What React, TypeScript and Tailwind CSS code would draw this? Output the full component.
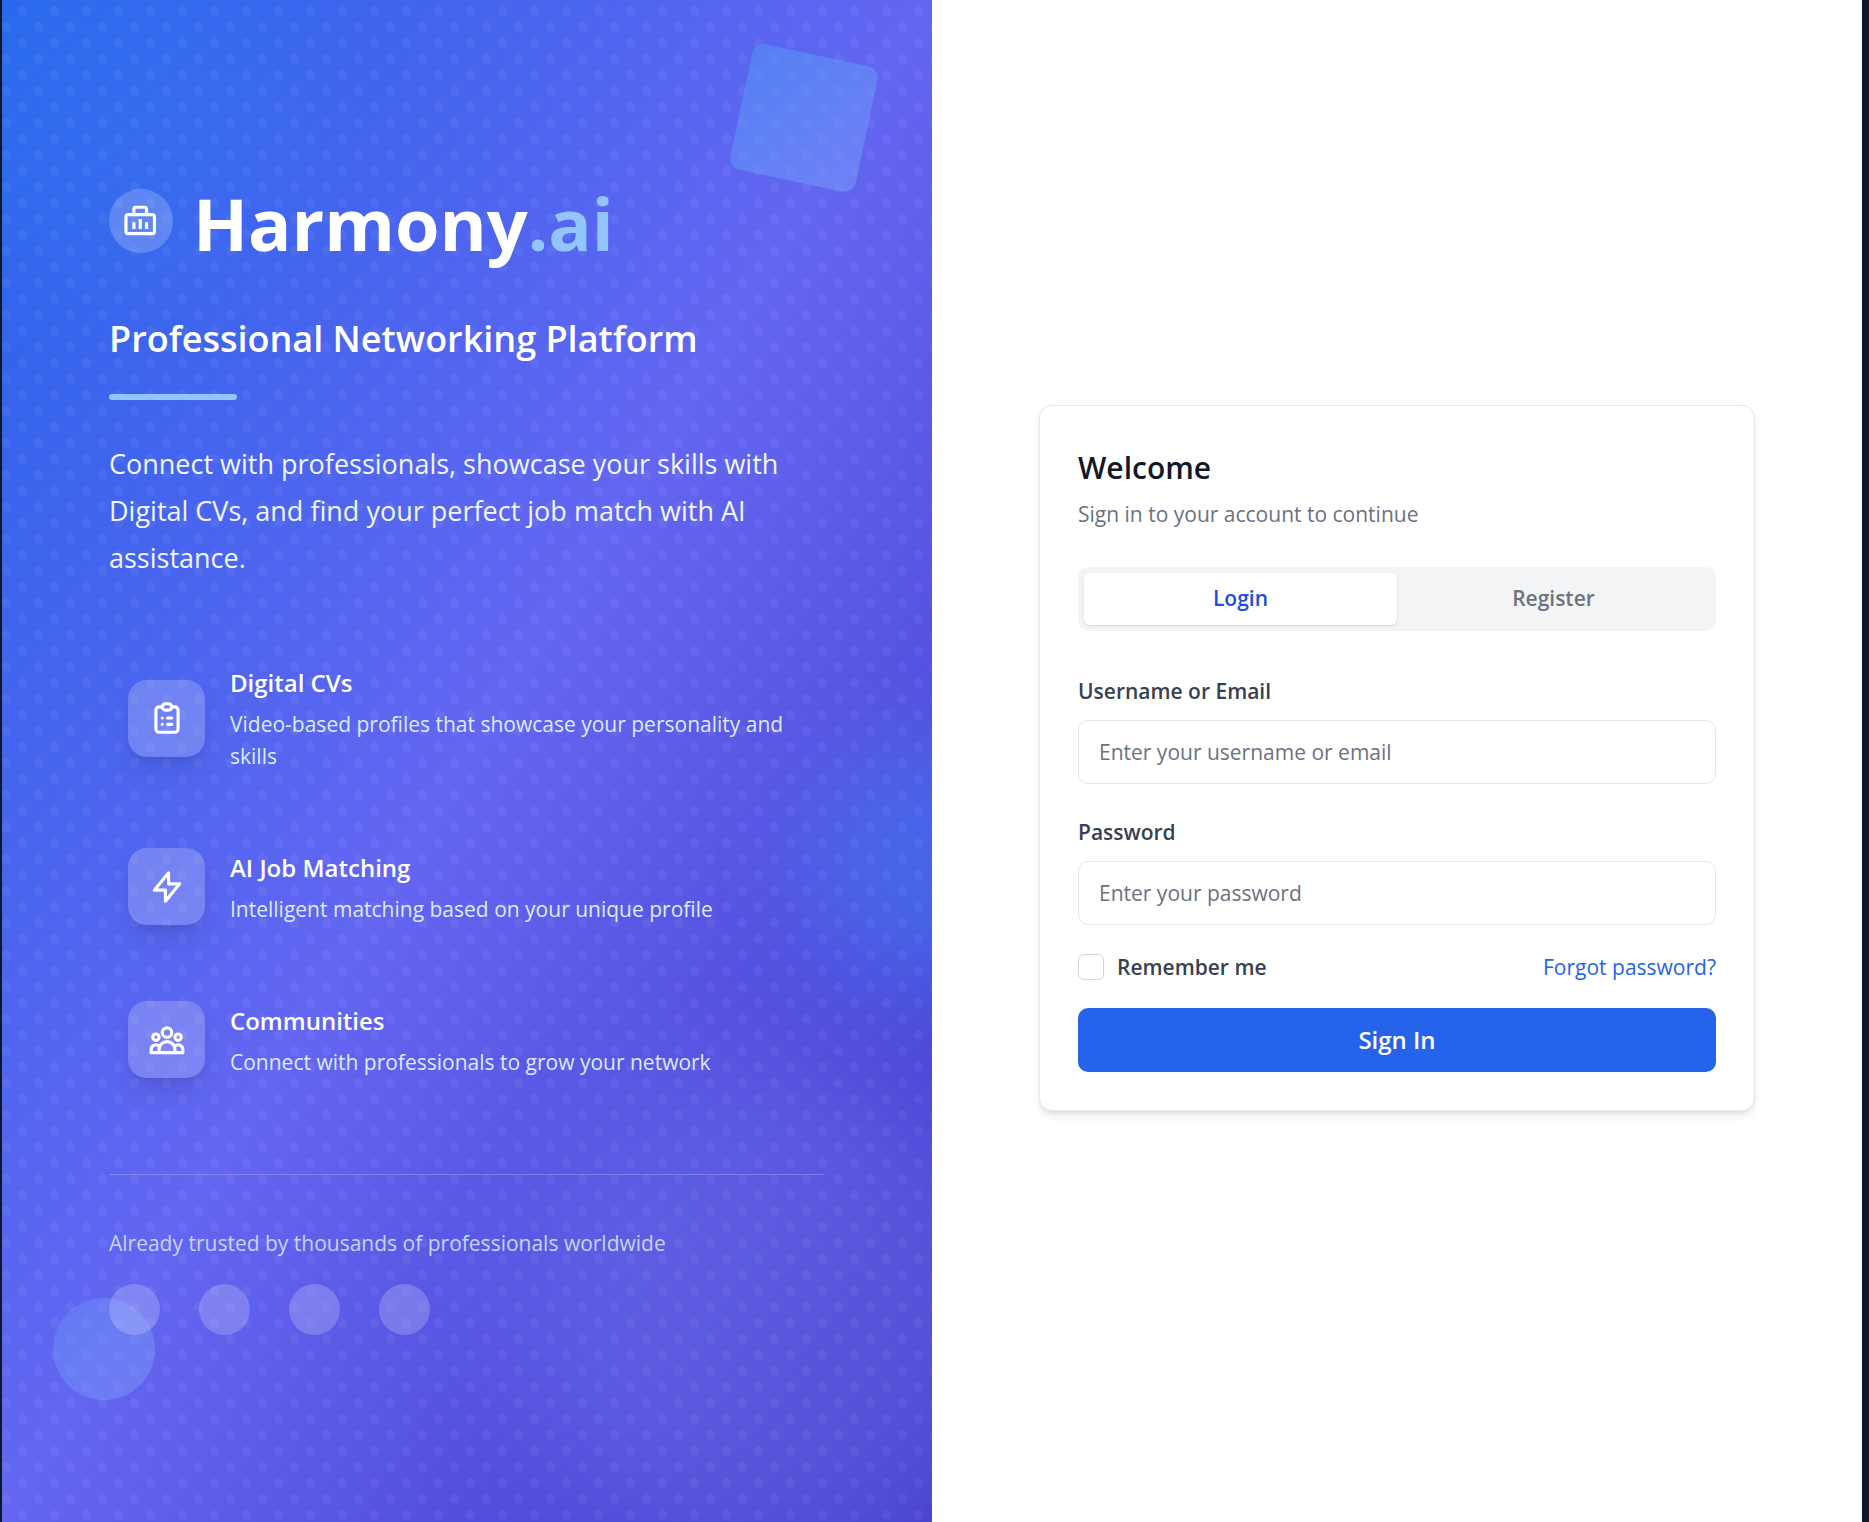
import { useState } from "react";

const features = [
  {
    title: "Digital CVs",
    text: "Video-based profiles that showcase your personality and skills",
    icon: (
      <>
        <path d="M9 5H7a2 2 0 0 0-2 2v12a2 2 0 0 0 2 2h10a2 2 0 0 0 2-2V7a2 2 0 0 0-2-2h-2" />
        <rect x="9" y="3" width="6" height="4" rx="2" />
        <path d="M9 12h.01M12.300 12H15M9 16h.01M12.300 16H15" />
      </>
    ),
  },
  {
    title: "AI Job Matching",
    text: "Intelligent matching based on your unique profile",
    icon: <path d="M13 10V3L4 14h7v7l9-11h-7z" />,
  },
  {
    title: "Communities",
    text: "Connect with professionals to grow your network",
    icon: (
      <>
        <circle cx="12" cy="7.300" r="3" />
        <circle cx="5" cy="10.200" r="2" />
        <circle cx="19" cy="10.200" r="2" />
        <path d="M7 20v-2a5 5 0 0 1 10 0v2H2v-2a3 3 0 0 1 5-2.200M17 20h5v-2a3 3 0 0 0-5-2.200" />
      </>
    ),
  },
];

function DotPattern() {
  return (
    <svg className="absolute inset-0 h-full w-full" aria-hidden="true">
      <defs>
        <pattern id="dots" width="32" height="32" patternUnits="userSpaceOnUse">
          <circle cx="4.8" cy="26.8" r="4.8" fill="#fff" fillOpacity="0.05" />
          <circle cx="20.8" cy="10.8" r="4.8" fill="#fff" fillOpacity="0.05" />
        </pattern>
      </defs>
      <rect width="100%" height="100%" fill="url(#dots)" />
    </svg>
  );
}

function Hero() {
  return (
    <section className="relative flex flex-1 flex-col items-center justify-center overflow-hidden bg-linear-to-br/srgb from-[#2563eb] via-[#6366f1] to-[#4338ca] pb-1">
      <div className="absolute -left-24 -top-24 h-96 w-96 rounded-full bg-[#3b82f6] opacity-25 blur-[64px]" />
      <div className="absolute -right-32 top-[740px] h-64 w-64 rounded-full bg-[#3b82f6] opacity-45 blur-[50px]" />
      <div className="absolute -bottom-16 -right-28 h-[512px] w-[512px] rounded-full bg-[#818cf8] opacity-25 blur-[64px]" />
      <DotPattern />
      <div className="absolute right-16 top-[54px] h-32 w-32 rotate-12 rounded-xl bg-linear-to-br/srgb from-[#4aa8fa] to-[#80aafa] opacity-40" />
      <div className="absolute bottom-[122px] left-[51px] h-[102px] w-[102px] rounded-full bg-linear-to-br/srgb from-[#62a7fa] to-[#96b7fa] opacity-30" />

      <div className="relative w-full max-w-[716px]">
        <div className="flex items-center gap-5">
          <div className="flex h-16 w-16 items-center justify-center rounded-full bg-white/20">
            <svg className="h-[38px] w-[38px]" viewBox="0 0 24 24" fill="none" stroke="#fff" strokeWidth="2" strokeLinecap="round" strokeLinejoin="round" aria-hidden="true">
              <rect x="2.500" y="8" width="18" height="12" rx="1.5" />
              <path d="M7.500 8V4.500a1.200 1.200 0 0 1 1.200-1.200h5.600a1.200 1.200 0 0 1 1.200 1.200V8" />
              <path d="M7.500 12.800v4.200M11.500 10.800v6.200M15.500 12.800v4.200" strokeLinecap="butt" />
            </svg>
          </div>
          <h1 className="pt-1 text-[72px] font-bold leading-[72px] text-white">
            Harmony<span className="text-[#93c5fd]">.ai</span>
          </h1>
        </div>

        <h2 className="mt-[54px] text-[36px] font-semibold leading-[51px] text-white">Professional Networking Platform</h2>
        <div className="mt-[30px] h-[6px] w-32 rounded-full bg-[#93c5fd]" />
        <p className="mt-10 text-[27px] leading-[47px] text-[#eff6ff]">
          Connect with professionals, showcase your skills with Digital CVs, and find your perfect job match with AI
          assistance.
        </p>

        <ul className="mt-16 flex flex-col gap-[38px]">
          {features.map((f) => (
            <li key={f.title} className="flex items-center gap-[25px] px-[19px] py-[19px]">
              <div className="flex h-[77px] w-[77px] shrink-0 items-center justify-center rounded-[19px] bg-white/20 shadow-[0_16px_24px_-5px_rgba(0,0,0,0.1),0_6px_10px_-6px_rgba(0,0,0,0.1)]">
                <svg className="h-[38px] w-[38px]" viewBox="0 0 24 24" fill="none" stroke="#fff" strokeWidth="2" strokeLinecap="round" strokeLinejoin="round" aria-hidden="true">
                  {f.icon}
                </svg>
              </div>
              <div>
                <h3 className="text-[24px] font-semibold leading-[38px] text-white">{f.title}</h3>
                <p className="mt-[6px] text-[21px] leading-8 text-[#dbeafe]">{f.text}</p>
              </div>
            </li>
          ))}
        </ul>

        <div className="mt-[77px] border-t border-white/20 pt-[52px]">
          <p className="text-[21px] leading-8 text-[#c7d2fe]">Already trusted by thousands of professionals worldwide</p>
          <div className="mt-[25px] flex gap-[39px]">
            {[0, 1, 2, 3].map((n) => (
              <div key={n} className="h-[51px] w-[51px] rounded-full bg-white/20" />
            ))}
          </div>
        </div>
      </div>
    </section>
  );
}

function Field({ id, label, type, placeholder }: { id: string; label: string; type: string; placeholder: string }) {
  return (
    <div className="flex flex-col gap-[13px]">
      <label htmlFor={id} className="text-[21px] font-semibold leading-8 text-[#374151]">
        {label}
      </label>
      <input
        id={id}
        type={type}
        placeholder={placeholder}
        className="h-16 w-full rounded-[10px] border border-[#e5e7eb] bg-white px-5 text-[21px] text-[#111827] placeholder:text-[#6b7280]"
      />
    </div>
  );
}

export default function App() {
  const [tab, setTab] = useState("Login");
  return (
    <div className="flex min-h-screen border-l-2 border-r-[7px] border-[#0f172a] bg-white font-['Open_Sans',sans-serif]">
      <Hero />
      <main className="flex flex-1 items-center justify-center pb-[6px]">
        <div className="w-full max-w-[716px] rounded-[13px] border border-[#e5e7eb] bg-white p-[38px] shadow-[0_6px_10px_-2px_rgba(0,0,0,0.1),0_3px_6px_-3px_rgba(0,0,0,0.1)]">
          <h2 className="text-[30px] font-semibold leading-[48px] text-[#111827]">Welcome</h2>
          <p className="mt-[6px] text-[21px] leading-8 text-[#6b7280]">Sign in to your account to continue</p>

          <div role="tablist" className="mt-[37px] grid h-16 grid-cols-2 rounded-[10px] bg-[#f3f4f6] p-[6px]">
            {["Login", "Register"].map((name) => (
              <button
                key={name}
                type="button"
                role="tab"
                aria-selected={tab === name}
                onClick={() => setTab(name)}
                className={
                  tab === name
                    ? "rounded-[6px] bg-white text-[21px] font-semibold text-[#1d4ed8] shadow-sm"
                    : "rounded-[6px] text-[21px] font-semibold text-[#6b7280]"
                }
              >
                {name}
              </button>
            ))}
          </div>

          <form className="mt-11 flex flex-col" onSubmit={(e) => e.preventDefault()}>
            <div className="flex flex-col gap-8">
              <Field id="username" label="Username or Email" type="text" placeholder="Enter your username or email" />
              <Field id="password" label="Password" type="password" placeholder="Enter your password" />
            </div>
            <div className="mt-[26px] flex items-center justify-between">
              <div className="flex items-center gap-[13px]">
                <input
                  id="remember"
                  type="checkbox"
                  className="h-[26px] w-[26px] appearance-none rounded-[6px] border border-[#d1d5db] bg-white checked:bg-[#2563eb]"
                />
                <label htmlFor="remember" className="text-[21px] font-semibold leading-8 text-[#374151]">
                  Remember me
                </label>
              </div>
              <a href="#forgot" className="text-[21px] leading-8 text-[#2563eb]">
                Forgot password?
              </a>
            </div>
            <button type="submit" className="mt-[25px] h-16 w-full rounded-[10px] bg-[#2563eb] text-[24px] font-semibold text-white">
              Sign In
            </button>
          </form>
        </div>
      </main>
    </div>
  );
}
